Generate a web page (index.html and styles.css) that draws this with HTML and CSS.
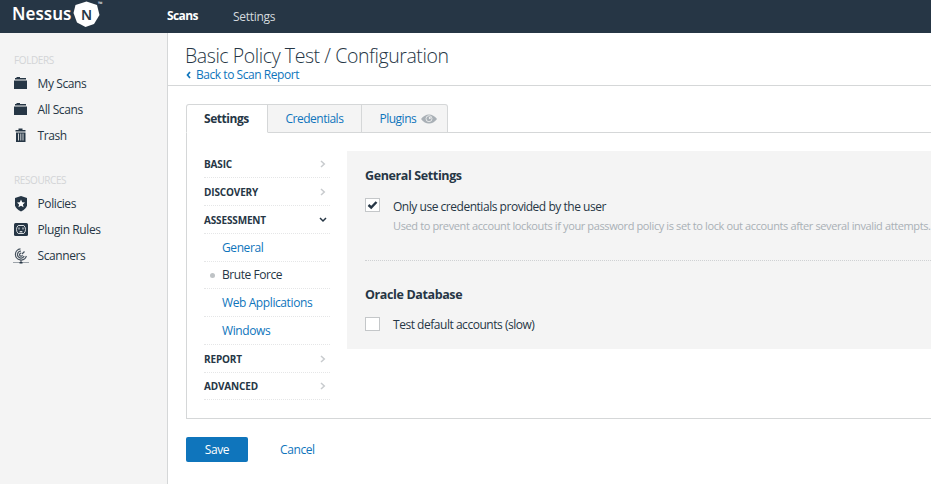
FILE: index.html
```html
<!DOCTYPE html>
<html lang="en">
<head>
<meta charset="utf-8">
<title>Nessus</title>
<link rel="stylesheet" href="styles.css">
</head>
<body>
<header class="topbar">
  <div class="brand"><span class="t brand-name">Nessus</span>
    <svg class="brand-mark" width="28" height="27" viewBox="0 0 28 27"><path d="M2.500 4 13.500.5 24 4 26.500 14 21 23 12.500 26 4 21.500.500 12z" fill="#fff"/><text x="8" y="19" class="brand-letter">N</text></svg>
    <span class="tm">™</span></div>
  <nav class="topnav"><a class="active t w-scans">Scans</a><a class="t w-set">Settings</a></nav>
</header>
<div class="shell">
  <aside class="sidebar">
    <h2 class="label"><span class="t">FOLDERS</span></h2>
    <a class="side"><svg width="16" height="16" viewBox="0 0 16 16"><path d="M2 3.500V2h1.500V1H7v1h6v1.500zM1 4.500h13V13H1z"/></svg><span class="t">My Scans</span></a>
    <a class="side"><svg width="16" height="16" viewBox="0 0 16 16"><path d="M2 3.500V2h1.500V1H7v1h6v1.500zM1 4.500h13V13H1z"/></svg><span class="t">All Scans</span></a>
    <a class="side"><svg width="16" height="16" viewBox="0 0 16 16"><path d="M2.500 2h3V.500h4V2h3v1.500h-10zM3 4.500h9.500V14H3z"/><path d="M5.500 5.500v7M7.800 5.500v7M10 5.500v7" stroke="#d5d8da"/></svg><span class="t">Trash</span></a>
    <h2 class="label second"><span class="t">RESOURCES</span></h2>
    <a class="side"><svg width="16" height="16" viewBox="0 0 16 16"><path d="M8 0 14 2v7.500Q13 13 8 15.500 3 13 2 9.500V2z"/><path d="m8 3.500 1.200 2.700 2.800.3-2.100 1.900.7 2.900L8 9.800l-2.600 1.500.7-2.900L4 6.500l2.800-.3z" fill="#fff"/></svg><span class="t">Policies</span></a>
    <a class="side"><svg width="16" height="16" viewBox="0 0 16 16"><rect x="1" y="1" width="14" height="13" rx="1.500"/><path d="M5.200 3.500h5.600Q12.500 5 12.500 7.500t-1.700 4H5.200q-1.700-1.500-1.700-4t1.700-4z" fill="none" stroke="#d9dde0"/><path d="M6 5.500v2M10 5.500v2M7.200 10.500V9.500h1.600v1" fill="none" stroke="#d9dde0" stroke-width="1.100"/></svg><span class="t">Plugin Rules</span></a>
    <a class="side"><svg width="16" height="16" viewBox="0 0 16 16"><g fill="none" stroke="#46525e" stroke-width="1.200"><path d="M7.500.8A5.600 5.600 0 1 0 13.400 8M8 3a3.500 3.500 0 1 0 3.200 5M8.200 5.200A1.500 1.500 0 1 0 9.500 7.200M9 6l2.500-2.500M8 12v3"/></g><path d="M0 14.500h16" stroke="#9da4aa"/><path d="M6.500 14h3v1.500h-3z"/></svg><span class="t">Scanners</span></a>
  </aside>
  <main class="main">
    <div class="heading">
      <h1><span class="t">Basic Policy Test / Configuration</span></h1>
      <a class="back"><svg width="5" height="8" viewBox="0 0 5 8"><path d="M4 1 1.500 4 4 7" fill="none" stroke="#0f75bc" stroke-width="1.700"/></svg><span class="t">Back to Scan Report</span></a>
    </div>
    <div class="tabs">
      <a class="tab on"><span class="t">Settings</span></a>
      <a class="tab cred"><span class="t">Credentials</span></a>
      <a class="tab plug"><span class="t">Plugins</span><svg width="16" height="10" viewBox="0 0 16 10"><path d="M0 5Q3.500.5 8 .5T16 5Q12.500 9.500 8 9.500T0 5z" fill="#a9b0b6"/><circle cx="8" cy="4.700" r="3" fill="none" stroke="#f4f4f4" stroke-width=".8"/><circle cx="8.800" cy="3.900" r="1" fill="#f4f4f4"/></svg></a>
    </div>
    <div class="panel">
      <nav class="menu">
        <a class="group"><span class="t">BASIC</span><svg width="6" height="8" viewBox="0 0 6 8"><path d="m1 1 3.300 3L1 7"/></svg></a>
        <a class="group"><span class="t">DISCOVERY</span><svg width="6" height="8" viewBox="0 0 6 8"><path d="m1 1 3.300 3L1 7"/></svg></a>
        <a class="group open"><span class="t">ASSESSMENT</span><svg width="8" height="6" viewBox="0 0 8 6"><path d="m1 1 3 3 3-3"/></svg></a>
        <a class="sub"><span class="t">General</span></a>
        <a class="sub current"><span class="t">Brute Force</span></a>
        <a class="sub"><span class="t">Web Applications</span></a>
        <a class="sub"><span class="t">Windows</span></a>
        <a class="group"><span class="t">REPORT</span><svg width="6" height="8" viewBox="0 0 6 8"><path d="m1 1 3.300 3L1 7"/></svg></a>
        <a class="group last"><span class="t">ADVANCED</span><svg width="6" height="8" viewBox="0 0 6 8"><path d="m1 1 3.300 3L1 7"/></svg></a>
      </nav>
      <section class="form">
        <div class="block first">
          <h3><span class="t">General Settings</span></h3>
          <div class="check"><span class="box"><svg width="13" height="12" viewBox="0 0 13 12"><path d="m2.500 6 2.700 2.500L10.500 3" fill="none" stroke="#263645" stroke-width="2.400"/></svg></span><span class="t option">Only use credentials provided by the user</span></div>
          <p class="hint"><span class="t">Used to prevent account lockouts if your password policy is set to lock out accounts after several invalid attempts.</span></p>
        </div>
        <div class="block">
          <h3><span class="t">Oracle Database</span></h3>
          <div class="check"><span class="box"></span><span class="t">Test default accounts (slow)</span></div>
        </div>
      </section>
    </div>
    <div class="actions"><a class="save"><span class="t">Save</span></a><a class="cancel"><span class="t">Cancel</span></a></div>
  </main>
</div>
</body>
</html>
```

FILE: styles.css
```css
* { box-sizing: border-box; }
body { margin: 0; width: 931px; height: 493px; overflow: hidden; background: #fff; color: #263645; font: 12px/18px "Open Sans", "Noto Sans", sans-serif; letter-spacing: -0.4px; }
h1, h2, h3, p { margin: 0; font-weight: 400; }
.t { white-space: nowrap; }
.topbar { height: 33px; background: #263645; display: flex; color: #fff; }
.brand { width: 167px; padding-left: 12px; display: flex; }
.brand-name { font: 600 17px/28px "Noto Sans", sans-serif; letter-spacing: 0; width: 61px; }
.brand-mark { margin-top: 1px; }
.brand-letter { font: 600 14px "Noto Sans", sans-serif; fill: #263645; letter-spacing: 0; }
.tm { font-size: 6px; line-height: 8px; margin-left: -3px; }
.topnav { display: flex; line-height: 32px; }
.topnav .active { font-weight: 700; width: 66px; letter-spacing: -0.6px; }
.w-set { color: #d5dade; padding-top: 1px; letter-spacing: -0.3px; }
.shell { display: flex; height: 451px; }
.sidebar { width: 168px; background: #f4f4f4; border-right: 1px solid #d5d7d8; padding: 18px 0 0 14px; }
.label { font-size: 10px; line-height: 18px; color: #d3d5d7; margin-bottom: 2px; }
.label.second { margin-top: 22px; margin-bottom: 2px; }
.side { display: flex; align-items: center; height: 26px; gap: 8.500px; }
.side svg { fill: #263645; flex: none; margin-left: -1px; }
.main { flex: 1; min-width: 0; }
.heading { height: 53px; border-bottom: 1px solid #d5d7d8; padding: 10px 0 0 17px; }
h1 { font-size: 19.500px; line-height: 26px; font-weight: 300; letter-spacing: -0.42px; }
.back { display: flex; align-items: center; gap: 5px; line-height: 12px; color: #0f75bc; letter-spacing: -0.45px; padding-left: 1px; }
.tabs { display: flex; margin: 18px 0 0 18px; height: 29px; position: relative; }
.tab { border: 1px solid #d5d7d8; border-left-width: 0; background: #f4f4f4; color: #0f75bc; line-height: 28px; padding-left: 17.500px; letter-spacing: -0.5px; }
.tab.on { width: 82px; border-left-width: 1px; border-bottom-color: #fff; background: #fff; color: #263645; font-weight: 700; padding-left: 17px; border-radius: 3px 0 0; letter-spacing: -0.45px; }
.cred { width: 94px; }
.plug { width: 86px; border-radius: 0 3px 0 0; display: flex; align-items: center; gap: 5px; }
.panel { display: flex; margin: -1px 0 0 18px; height: 287px; border: 1px solid #d5d7d8; border-right: 0; padding: 18px 0 0 17px; }
.menu { width: 126px; flex: none; margin: -1px 17px 0 0; }
.group, .sub { display: flex; align-items: center; height: 28px; border-bottom: 1px dotted #e5e6e7; }
.group { justify-content: space-between; font-size: 10px; font-weight: 700; padding-right: 4px; letter-spacing: -0.15px; }
.group svg { fill: none; stroke: #c8cbce; stroke-width: 1.500; }
.group.open svg { stroke: #263645; margin-right: -1px; }
.group.last { height: 27px; }
.sub { color: #0f75bc; padding-left: 18px; }
.current { height: 27px; color: #263645; padding-left: 6px; letter-spacing: -0.45px; }
.current::before { content: ""; width: 5px; height: 5px; border-radius: 3px; background: #bfc3c6; margin-right: 7px; }
.form { flex: 1; min-width: 0; height: 198px; background: #f4f4f4; padding-left: 18px; }
.block { padding-top: 25px; }
.first { height: 110px; border-bottom: 1px dotted #cfd1d3; padding-top: 16px; }
h3 { font-size: 12.500px; font-weight: 700; line-height: 18px; margin-bottom: 11px; letter-spacing: -0.38px; }
.check { display: flex; height: 20px; align-items: center; letter-spacing: -0.47px; }
.box { width: 15px; height: 14px; border: 1px solid #c4c7c9; background: #fff; margin: -2px 13px 0 0; }
.box svg { display: block; }
.option { padding-top: 2px; }
.hint { padding: 1px 0 0 28px; font-size: 11px; letter-spacing: -0.38px; color: #a9b0b6; }
.actions { display: flex; margin: 18px 0 0 18px; line-height: 25px; }
.save { width: 62px; height: 25px; background: #0f75bc; color: #fff; border-radius: 2px; text-align: center; }
.cancel { color: #0f75bc; margin-left: 32px; }
```
